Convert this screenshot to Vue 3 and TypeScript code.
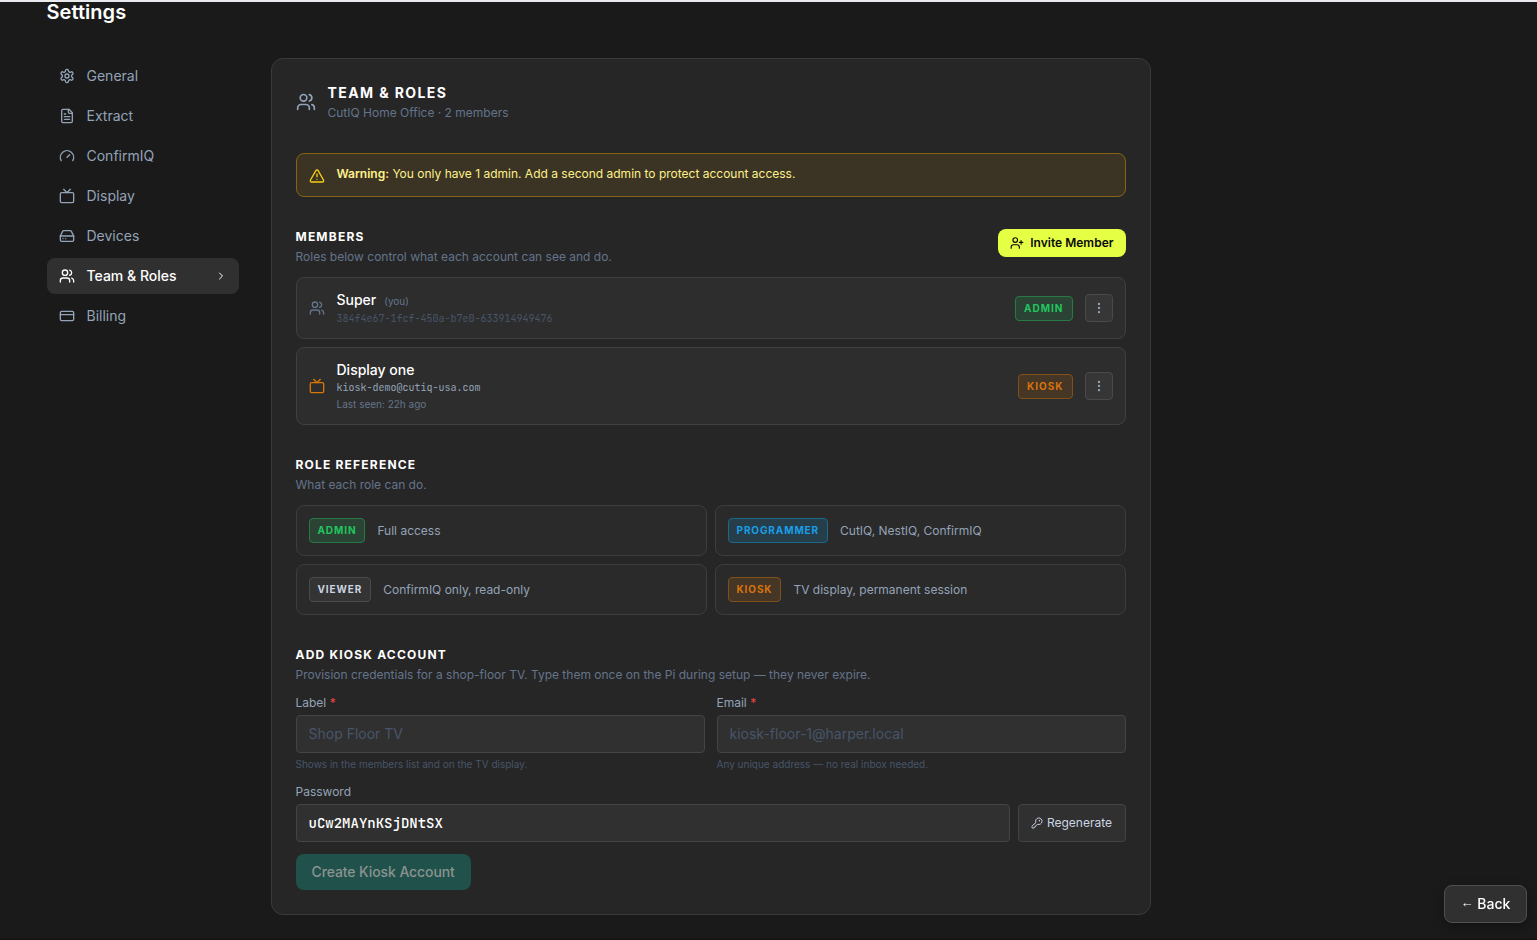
<script setup lang="ts">
import { computed, ref } from 'vue'

type Role = 'admin' | 'programmer' | 'viewer' | 'kiosk'

const icons: Record<string, string> = {
  gear: '<path d="M12.22 2h-.44a2 2 0 0 0-2 2v.18a2 2 0 0 1-1 1.73l-.43.25a2 2 0 0 1-2 0l-.15-.08a2 2 0 0 0-2.73.73l-.22.38a2 2 0 0 0 .73 2.73l.15.1a2 2 0 0 1 1 1.72v.51a2 2 0 0 1-1 1.74l-.15.09a2 2 0 0 0-.73 2.73l.22.38a2 2 0 0 0 2.73.73l.15-.08a2 2 0 0 1 2 0l.43.25a2 2 0 0 1 1 1.73V20a2 2 0 0 0 2 2h.44a2 2 0 0 0 2-2v-.18a2 2 0 0 1 1-1.73l.43-.25a2 2 0 0 1 2 0l.15.08a2 2 0 0 0 2.73-.73l.22-.39a2 2 0 0 0-.73-2.73l-.15-.08a2 2 0 0 1-1-1.74v-.5a2 2 0 0 1 1-1.74l.15-.09a2 2 0 0 0 .73-2.73l-.22-.38a2 2 0 0 0-2.73-.73l-.15.08a2 2 0 0 1-2 0l-.43-.25a2 2 0 0 1-1-1.73V4a2 2 0 0 0-2-2z"/><circle cx="12" cy="12" r="3"/>',
  file: '<path d="M15 2H6a2 2 0 0 0-2 2v16a2 2 0 0 0 2 2h12a2 2 0 0 0 2-2V7Z"/><path d="M14 2v4a2 2 0 0 0 2 2h4"/><path d="M10 9H8"/><path d="M16 13H8"/><path d="M16 17H8"/>',
  gauge: '<path d="m12 14 4-4"/><path d="M3.34 19a10 10 0 1 1 17.32 0"/>',
  tv: '<path d="m17 2-5 5-5-5"/><rect width="20" height="15" x="2" y="7" rx="2"/>',
  drive: '<path d="M22 12H2"/><path d="M5.45 5.11 2 12v6a2 2 0 0 0 2 2h16a2 2 0 0 0 2-2v-6l-3.45-6.89A2 2 0 0 0 16.76 4H7.24a2 2 0 0 0-1.79 1.11z"/><path d="M6 16h.01"/><path d="M10 16h.01"/>',
  users: '<path d="M16 21v-2a4 4 0 0 0-4-4H6a4 4 0 0 0-4 4v2"/><circle cx="9" cy="7" r="4"/><path d="M22 21v-2a4 4 0 0 0-3-3.87"/><path d="M16 3.13a4 4 0 0 1 0 7.75"/>',
  card: '<rect width="20" height="14" x="2" y="5" rx="2"/><path d="M2 10h20"/>',
  chevron: '<path d="m9 18 6-6-6-6"/>',
  warning: '<path d="m21.73 18-8-14a2 2 0 0 0-3.48 0l-8 14A2 2 0 0 0 4 21h16a2 2 0 0 0 1.73-3"/><path d="M12 9v4"/><path d="M12 17h.01"/>',
  userPlus: '<path d="M16 21v-2a4 4 0 0 0-4-4H6a4 4 0 0 0-4 4v2"/><circle cx="9" cy="7" r="4"/><path d="M19 8v6"/><path d="M22 11h-6"/>',
  dots: '<circle cx="12" cy="12" r="1"/><circle cx="12" cy="5" r="1"/><circle cx="12" cy="19" r="1"/>',
  key: '<path d="M2.586 17.414A2 2 0 0 0 2 18.828V21a1 1 0 0 0 1 1h3a1 1 0 0 0 1-1v-1a1 1 0 0 1 1-1h1a1 1 0 0 0 1-1v-1a1 1 0 0 1 1-1h.172a2 2 0 0 0 1.414-.586l.814-.814a6.5 6.5 0 1 0-4-4z"/><circle cx="16.5" cy="7.5" r=".5"/>',
}

const nav = [
  { label: 'General', icon: 'gear' },
  { label: 'Extract', icon: 'file' },
  { label: 'ConfirmIQ', icon: 'gauge' },
  { label: 'Display', icon: 'tv' },
  { label: 'Devices', icon: 'drive' },
  { label: 'Team & Roles', icon: 'users' },
  { label: 'Billing', icon: 'card' },
]
const active = ref('Team & Roles')

const members: { name: string; you?: boolean; id: string; email?: boolean; seen?: string; role: Role; icon: string }[] = [
  { name: 'Super', you: true, id: '384f4e67-1fcf-450a-b7e0-633914949476', role: 'admin', icon: 'users' },
  { name: 'Display one', id: 'kiosk-demo@cutiq-usa.com', email: true, seen: 'Last seen: 22h ago', role: 'kiosk', icon: 'tv' },
]

const roles: { role: Role; text: string }[] = [
  { role: 'admin', text: 'Full access' },
  { role: 'programmer', text: 'CutIQ, NestIQ, ConfirmIQ' },
  { role: 'viewer', text: 'ConfirmIQ only, read-only' },
  { role: 'kiosk', text: 'TV display, permanent session' },
]

const label = ref('')
const email = ref('')
const password = ref('uCw2MAYnKSjDNtSX')
const canCreate = computed(() => label.value !== '' && email.value !== '')

function regenerate() {
  const chars = 'ABCDEFGHJKLMNPQRSTUVWXYZabcdefghjkmnpqrstuvwxyz23456789'
  password.value = Array.from({ length: 16 }, () => chars[Math.floor(Math.random() * chars.length)]).join('')
}
</script>

<template>
  <div class="app">
    <h1 class="title">Settings</h1>
    <div class="layout">
      <nav class="nav">
        <button
          v-for="item in nav"
          :key="item.label"
          class="nav-item"
          :class="{ active: item.label === active }"
          @click="active = item.label"
        >
          <svg class="icon s16" viewBox="0 0 24 24" v-html="icons[item.icon]" />
          <span class="nav-label">{{ item.label }}</span>
          <svg v-if="item.label === active" class="icon s12" viewBox="0 0 24 24" v-html="icons.chevron" />
        </button>
      </nav>

      <main class="panel">
        <header class="panel-head">
          <svg class="icon s20" viewBox="0 0 24 24" v-html="icons.users" />
          <div>
            <h2 class="panel-title">TEAM &amp; ROLES</h2>
            <p class="panel-sub">CutIQ Home Office · 2 members</p>
          </div>
        </header>

        <div class="warning">
          <svg class="icon s16" viewBox="0 0 24 24" v-html="icons.warning" />
          <p><strong>Warning:</strong> You only have 1 admin. Add a second admin to protect account access.</p>
        </div>

        <section>
          <div class="section-head">
            <div>
              <h3>MEMBERS</h3>
              <p class="sub">Roles below control what each account can see and do.</p>
            </div>
            <button class="invite">
              <svg class="icon s14" viewBox="0 0 24 24" v-html="icons.userPlus" />
              <span>Invite Member</span>
            </button>
          </div>
          <div class="members">
            <div v-for="m in members" :key="m.id" class="member">
              <svg class="icon s16" :class="m.role" viewBox="0 0 24 24" v-html="icons[m.icon]" />
              <div class="info">
                <div class="name">{{ m.name }}<span v-if="m.you" class="you">(you)</span></div>
                <div class="mono" :class="{ email: m.email }">{{ m.id }}</div>
                <div v-if="m.seen" class="seen">{{ m.seen }}</div>
              </div>
              <span class="badge" :class="m.role">{{ m.role.toUpperCase() }}</span>
              <button class="more" aria-label="Actions">
                <svg class="icon s14" viewBox="0 0 24 24" v-html="icons.dots" />
              </button>
            </div>
          </div>
        </section>

        <section>
          <h3>ROLE REFERENCE</h3>
          <p class="sub">What each role can do.</p>
          <div class="roles">
            <div v-for="r in roles" :key="r.role" class="role">
              <span class="badge" :class="r.role">{{ r.role.toUpperCase() }}</span>
              <span>{{ r.text }}</span>
            </div>
          </div>
        </section>

        <section>
          <h3>ADD KIOSK ACCOUNT</h3>
          <p class="sub">Provision credentials for a shop-floor TV. Type them once on the Pi during setup — they never expire.</p>
          <div class="fields">
            <label>
              <span class="label">Label <i>*</i></span>
              <input v-model="label" placeholder="Shop Floor TV" />
              <span class="hint">Shows in the members list and on the TV display.</span>
            </label>
            <label>
              <span class="label">Email <i>*</i></span>
              <input v-model="email" placeholder="kiosk-floor-1@harper.local" />
              <span class="hint">Any unique address — no real inbox needed.</span>
            </label>
          </div>
          <span class="label pw-label">Password</span>
          <div class="pw-row">
            <input v-model="password" class="pw" spellcheck="false" />
            <button class="regen" @click="regenerate">
              <svg class="icon s12" viewBox="0 0 24 24" v-html="icons.key" />
              <span>Regenerate</span>
            </button>
          </div>
          <button class="create" :disabled="!canCreate">Create Kiosk Account</button>
        </section>
      </main>
    </div>
    <button class="back"><span class="arrow">←</span> Back</button>
  </div>
</template>

<style>
html,
body {
  background: #1a1a1a;
  overflow: hidden;
}
</style>

<style scoped>
* {
  box-sizing: border-box;
  margin: 0;
}
.app {
  height: 940px;
  padding: 0 0 0 46.5px;
  border-top: 2px solid #e8eaed;
  border-bottom: 1px solid #141012;
  background: #1a1a1a;
  font-family: Inter, 'Liberation Sans', sans-serif;
  font-size: 12px;
  line-height: 16px;
  color: #fff;
}
button,
input {
  font-family: inherit;
  color: inherit;
}
.title {
  margin-top: -4px;
  font-size: 20px;
  line-height: 28px;
  font-weight: 600;
  letter-spacing: 0.05px;
}
.layout {
  display: flex;
  align-items: flex-start;
  gap: 32px;
  margin-top: 32px;
}
.icon {
  flex: none;
  display: block;
  fill: none;
  stroke: currentColor;
  stroke-width: 2;
  stroke-linecap: round;
  stroke-linejoin: round;
}
.s12 { width: 12px; height: 12px; }
.s14 { width: 14px; height: 14px; }
.s16 { width: 16px; height: 16px; }
.s20 { width: 20px; height: 20px; }
.nav {
  display: flex;
  flex-direction: column;
  gap: 4px;
  width: 192px;
}
.nav-item {
  display: flex;
  align-items: center;
  gap: 12px;
  height: 36px;
  padding: 0 12px;
  border: 0;
  border-radius: 8px;
  background: none;
  color: #94a3b8;
  font-size: 14px;
  line-height: 20px;
  text-align: left;
}
.nav-item.active {
  background: #303030;
  color: #fff;
  font-weight: 500;
}
.nav-label { flex: 1; }
.panel {
  width: 880px;
  padding: 24px;
  border: 1px solid #3a3a3a;
  border-radius: 12px;
  background: #262626;
}
.panel-head {
  display: flex;
  align-items: center;
  gap: 12px;
  color: #94a3b8;
}
.panel-title {
  font-size: 14px;
  line-height: 20px;
  font-weight: 700;
  letter-spacing: 1.4px;
  color: #fff;
}
.panel-sub {
  margin-top: 2px;
  color: #64748b;
}
.warning {
  display: flex;
  align-items: flex-start;
  gap: 12px;
  height: 44px;
  margin-top: 32px;
  padding: 12px;
  border: 1px solid #856514;
  border-radius: 8px;
  background: #3b3424;
  color: #fef08a;
}
.warning strong { font-weight: 600; }
.warning .icon {
  margin-top: 2px;
  color: #facc15;
}
section { margin-top: 32px; }
.section-head {
  display: flex;
  align-items: flex-start;
  justify-content: space-between;
}
h3 {
  font-size: 12px;
  line-height: 16px;
  font-weight: 700;
  letter-spacing: 1.2px;
}
.sub {
  margin-top: 4px;
  color: #64748b;
}
.invite {
  display: flex;
  align-items: center;
  gap: 6px;
  height: 28px;
  padding: 0 12px;
  border: 0;
  border-radius: 8px;
  background: #e5ff45;
  color: #0a0a0a;
  font-size: 12px;
  line-height: 16px;
  font-weight: 600;
}
.members {
  display: flex;
  flex-direction: column;
  gap: 8px;
  margin-top: 12px;
}
.member {
  display: flex;
  align-items: center;
  gap: 12px;
  padding: 12px;
  border: 1px solid #404040;
  border-radius: 8px;
  background: #2d2d2d;
}
.icon.admin { color: #64748b; }
.icon.kiosk { color: #d97706; }
.info { flex: 1; }
.name {
  font-size: 14px;
  line-height: 20px;
  font-weight: 500;
}
.you {
  margin-left: 8px;
  font-size: 10px;
  line-height: 10px;
  font-weight: 400;
  color: #64748b;
}
.mono {
  padding-top: 2px;
  font-family: 'JetBrains Mono', 'DejaVu Sans Mono', monospace;
  font-size: 10px;
  line-height: 14px;
  color: #475569;
}
.mono.email {
  padding-top: 0;
  line-height: 16px;
  color: #94a3b8;
}
.seen {
  font-size: 10px;
  line-height: 16px;
  color: #64748b;
}
.badge {
  padding: 4px 8px;
  border: 1px solid;
  border-radius: 4px;
  font-size: 10px;
  line-height: 15px;
  font-weight: 700;
  letter-spacing: 1px;
}
.role .badge { letter-spacing: 0.9px; }
.badge.admin { color: #22c55e; background: #2b4335; border-color: #277a45; }
.badge.kiosk { color: #d9730d; background: #463625; border-color: #80501a; }
.badge.programmer { color: #1a9fe8; background: #263d4a; border-color: #1c678c; }
.badge.viewer { color: #cbd5e1; background: #343434; border-color: #4a4a4a; }
.more {
  display: grid;
  place-items: center;
  width: 28px;
  height: 28px;
  padding: 0;
  border: 1px solid #4a4a4a;
  border-radius: 4px;
  background: #363636;
  color: #94a3b8;
}
.roles {
  display: grid;
  grid-template-columns: 1fr 1fr;
  gap: 8px;
  margin-top: 12px;
}
.role {
  display: flex;
  align-items: center;
  gap: 12px;
  padding: 12px;
  border: 1px solid #3d3d3d;
  border-radius: 8px;
  background: #2a2a2a;
  color: #94a3b8;
}
.fields {
  display: grid;
  grid-template-columns: 1fr 1fr;
  gap: 12px;
  margin-top: 12px;
}
.label {
  display: block;
  margin-bottom: 4px;
  color: #94a3b8;
}
.label i {
  font-style: normal;
  color: #ef4444;
}
input {
  display: block;
  width: 100%;
  height: 38px;
  padding: 0 12px 1px;
  border: 1px solid #444;
  border-radius: 4px;
  outline: 0;
  background: #303030;
  font-size: 14px;
}
input::placeholder {
  color: #475569;
  opacity: 1;
}
.hint {
  display: block;
  margin-top: 4px;
  font-size: 10px;
  line-height: 15px;
  color: #475569;
}
.pw-label { margin-top: 12px; }
.pw-row {
  display: flex;
  gap: 8px;
}
.pw {
  flex: 1;
  font-family: 'JetBrains Mono', 'DejaVu Sans Mono', monospace;
  font-weight: 500;
}
.regen {
  display: flex;
  flex: none;
  align-items: center;
  justify-content: center;
  gap: 4px;
  width: 108px;
  height: 38px;
  padding: 0;
  border: 1px solid #444;
  border-radius: 4px;
  background: #303030;
  color: #cbd5e1;
  font-size: 12px;
  line-height: 16px;
}
.create {
  display: block;
  height: 36px;
  margin-top: 12px;
  padding: 0 16px;
  border: 0;
  border-radius: 8px;
  background: #20514a;
  color: #8c9391;
  font-size: 14px;
  line-height: 20px;
  font-weight: 500;
  letter-spacing: -0.1px;
}
.back {
  position: fixed;
  right: 10px;
  bottom: 17px;
  width: 83px;
  height: 38px;
  padding: 0 0 1px;
  border: 1px solid #505050;
  border-radius: 8px;
  background: #303030;
  box-shadow: 0 4px 12px rgba(0, 0, 0, 0.3);
  font-size: 14px;
  line-height: 20px;
  font-weight: 500;
}
.arrow {
  font-family: 'Liberation Sans', Arial, sans-serif;
  font-size: 13px;
  line-height: 1;
  vertical-align: 2px;
}
</style>
